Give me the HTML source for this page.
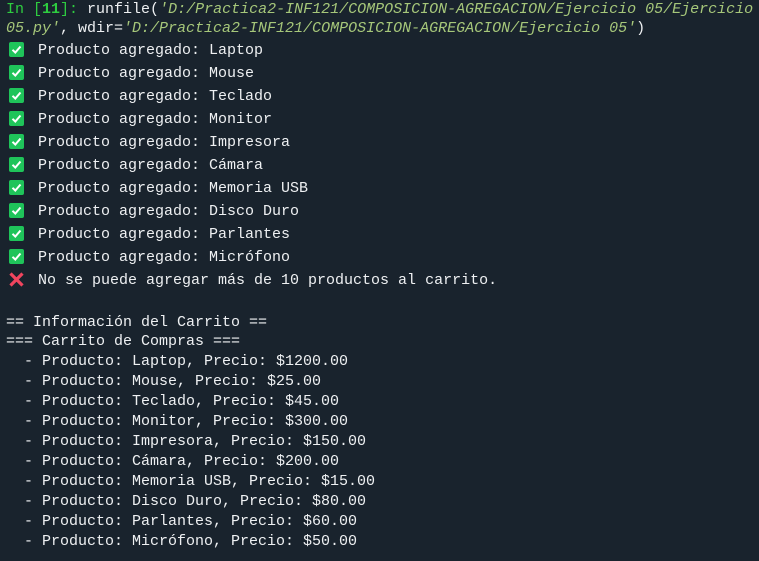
<!DOCTYPE html>
<html><head><meta charset="utf-8"><style>
body{margin:0;width:759px;height:561px;background:#19232d;overflow:hidden;font-family:"Liberation Mono","DejaVu Sans Mono",monospace;font-size:15px;color:#eef0f2;}
.l{position:absolute;left:6px;white-space:pre;line-height:18px;margin-top:2px}
.g{color:#2ecc40}.s{color:#a6c77a;font-style:italic}
.ck{position:absolute;left:9px;width:15px;height:15px;background:#1fc45a;border-radius:2px;margin-top:1px}
.ck svg{position:absolute;left:0;top:0}
.x{position:absolute;left:8px;width:17px;height:17px}
</style></head><body>
<div class="l" style="top:-1px"><span class="g">In [</span><span class="g" style="font-weight:bold">11</span><span class="g">]:</span> runfile(<span class="s">'D:/Practica2-INF121/COMPOSICION-AGREGACION/Ejercicio 05/Ejercicio</span></div>
<div class="l" style="top:18px"><span class="s">05.py'</span>, wdir=<span class="s">'D:/Practica2-INF121/COMPOSICION-AGREGACION/Ejercicio 05'</span>)</div>

<div class="ck" style="top:41px"><svg width="15" height="15"><path d="M3.5 7.8 L6.3 10.5 L11.5 4.5" stroke="#fff" stroke-width="2" fill="none"/></svg></div><div class="l" style="left:38px;top:40px">Producto agregado: Laptop</div>
<div class="ck" style="top:64px"><svg width="15" height="15"><path d="M3.5 7.8 L6.3 10.5 L11.5 4.5" stroke="#fff" stroke-width="2" fill="none"/></svg></div><div class="l" style="left:38px;top:63px">Producto agregado: Mouse</div>
<div class="ck" style="top:87px"><svg width="15" height="15"><path d="M3.5 7.8 L6.3 10.5 L11.5 4.5" stroke="#fff" stroke-width="2" fill="none"/></svg></div><div class="l" style="left:38px;top:86px">Producto agregado: Teclado</div>
<div class="ck" style="top:110px"><svg width="15" height="15"><path d="M3.5 7.8 L6.3 10.5 L11.5 4.5" stroke="#fff" stroke-width="2" fill="none"/></svg></div><div class="l" style="left:38px;top:109px">Producto agregado: Monitor</div>
<div class="ck" style="top:133px"><svg width="15" height="15"><path d="M3.5 7.8 L6.3 10.5 L11.5 4.5" stroke="#fff" stroke-width="2" fill="none"/></svg></div><div class="l" style="left:38px;top:132px">Producto agregado: Impresora</div>
<div class="ck" style="top:156px"><svg width="15" height="15"><path d="M3.5 7.8 L6.3 10.5 L11.5 4.5" stroke="#fff" stroke-width="2" fill="none"/></svg></div><div class="l" style="left:38px;top:155px">Producto agregado: Cámara</div>
<div class="ck" style="top:179px"><svg width="15" height="15"><path d="M3.5 7.8 L6.3 10.5 L11.5 4.5" stroke="#fff" stroke-width="2" fill="none"/></svg></div><div class="l" style="left:38px;top:178px">Producto agregado: Memoria USB</div>
<div class="ck" style="top:202px"><svg width="15" height="15"><path d="M3.5 7.8 L6.3 10.5 L11.5 4.5" stroke="#fff" stroke-width="2" fill="none"/></svg></div><div class="l" style="left:38px;top:201px">Producto agregado: Disco Duro</div>
<div class="ck" style="top:225px"><svg width="15" height="15"><path d="M3.5 7.8 L6.3 10.5 L11.5 4.5" stroke="#fff" stroke-width="2" fill="none"/></svg></div><div class="l" style="left:38px;top:224px">Producto agregado: Parlantes</div>
<div class="ck" style="top:248px"><svg width="15" height="15"><path d="M3.5 7.8 L6.3 10.5 L11.5 4.5" stroke="#fff" stroke-width="2" fill="none"/></svg></div><div class="l" style="left:38px;top:247px">Producto agregado: Micrófono</div>
<svg class="x" style="top:271px" viewBox="0 0 17 17"><path d="M2.5 2.5 L14.5 14.5 M14.5 2.5 L2.5 14.5" stroke="#f0455e" stroke-width="3.2"/></svg><div class="l" style="left:38px;top:270px">No se puede agregar más de 10 productos al carrito.</div>

<div class="l" style="top:312px">== Información del Carrito ==</div>
<div class="l" style="top:331px">=== Carrito de Compras ===</div>
<div class="l" style="top:351px">  - Producto: Laptop, Precio: $1200.00</div>
<div class="l" style="top:371px">  - Producto: Mouse, Precio: $25.00</div>
<div class="l" style="top:391px">  - Producto: Teclado, Precio: $45.00</div>
<div class="l" style="top:411px">  - Producto: Monitor, Precio: $300.00</div>
<div class="l" style="top:431px">  - Producto: Impresora, Precio: $150.00</div>
<div class="l" style="top:451px">  - Producto: Cámara, Precio: $200.00</div>
<div class="l" style="top:471px">  - Producto: Memoria USB, Precio: $15.00</div>
<div class="l" style="top:491px">  - Producto: Disco Duro, Precio: $80.00</div>
<div class="l" style="top:511px">  - Producto: Parlantes, Precio: $60.00</div>
<div class="l" style="top:531px">  - Producto: Micrófono, Precio: $50.00</div>
</body></html>
